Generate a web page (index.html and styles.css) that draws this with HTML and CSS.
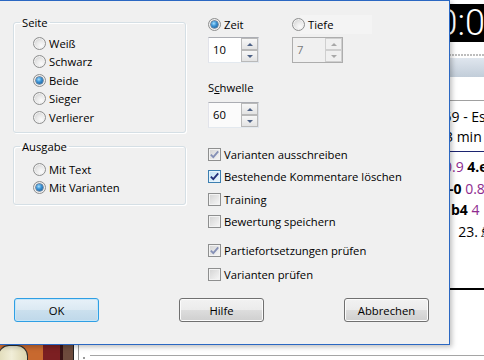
FILE: index.html
```html
<!DOCTYPE html>
<html lang="de">
  <head>
    <meta charset="utf-8" />
    <title>Analyse</title>
    <link rel="stylesheet" href="styles.css">
  </head>
  <body>
    <div class="app">
      <div class="board">
        <div class="piece"></div>
      </div>
      <div class="main">
        <div class="work">
          <div class="center"></div>
          <div class="notation">
            <div class="clock">00:00:00</div>
            <div class="dots"></div>
            <div class="tabbar"></div>
            <div class="game">
              <div class="line h1">2459 - Esbjerg</div>
              <div class="line h2">2+3 min</div>
            </div>
            <div class="moves">
              <div class="line m1"><span class="ev">+0.9</span> <b>4.e4</b></div>
              <div class="line m2"><b>0-0</b> <span class="ev">0.8</span></div>
              <div class="line m3"><b>b4</b> <span class="ev">4</span></div>
              <div class="line m4">23.&#9815;</div>
            </div>
          </div>
        </div>
        <div class="status"><span class="grip"></span><span class="rule"></span></div>
      </div>
    </div>

    <div class="dialog">
      <div class="dlg-body">
        <div class="col-left">
          <fieldset class="group">
            <legend>Seite</legend>
            <div class="opts">
              <label class="radio"><span class="rb"></span>Weiß</label>
              <label class="radio"><span class="rb"></span>Schwarz</label>
              <label class="radio"><span class="rb on"></span>Beide</label>
              <label class="radio"><span class="rb"></span>Sieger</label>
              <label class="radio"><span class="rb"></span>Verlierer</label>
            </div>
          </fieldset>
          <fieldset class="group group-out">
            <legend>Ausgabe</legend>
            <div class="opts">
              <label class="radio"><span class="rb"></span>Mit Text</label>
              <label class="radio"><span class="rb on"></span>Mit Varianten</label>
            </div>
          </fieldset>
        </div>

        <div class="col-right">
          <div class="modes">
            <div class="mode">
              <label class="radio"><span class="rb on"></span>Zeit</label>
              <div class="spin">
                <span class="val">10</span>
                <span class="arrows"><span class="up"></span><span class="down"></span></span>
              </div>
            </div>
            <div class="mode mode-off">
              <label class="radio"><span class="rb"></span><span class="lbl">Tiefe</span></label>
              <div class="spin spin-off">
                <span class="val">7</span>
                <span class="arrows"><span class="up"></span><span class="down"></span></span>
              </div>
            </div>
          </div>

          <div class="field-label">S<u>c</u>hwelle</div>
          <div class="spin spin-soft">
            <span class="val">60</span>
            <span class="arrows"><span class="up"></span><span class="down"></span></span>
          </div>

          <div class="checks">
            <label class="check c1"><span class="cb on soft"><svg viewBox="0 0 11 11"><path d="M1.8 5.6 4.3 8.2 9.2 2.4"/></svg></span>Varianten ausschreiben</label>
            <label class="check c2"><span class="cb on hot"><svg viewBox="0 0 11 11"><path d="M1.8 5.6 4.3 8.2 9.2 2.4"/></svg></span>Bestehende Kommentare löschen</label>
            <label class="check c3"><span class="cb"></span>Training</label>
            <label class="check c4"><span class="cb"></span>Bewertung speichern</label>
            <label class="check c5"><span class="cb on soft"><svg viewBox="0 0 11 11"><path d="M1.8 5.6 4.3 8.2 9.2 2.4"/></svg></span>Partiefortsetzungen prüfen</label>
            <label class="check c6"><span class="cb"></span>Varianten prüfen</label>
          </div>
        </div>
      </div>

      <div class="buttons">
        <button class="btn btn-default" type="button">OK</button>
        <button class="btn" type="button">Hilfe</button>
        <button class="btn" type="button">Abbrechen</button>
      </div>
    </div>
  </body>
</html>
```

FILE: styles.css
```css
* {
  box-sizing: border-box;
}
html,
body {
  margin: 0;
  padding: 0;
}
body {
  position: relative;
  width: 484px;
  height: 360px;
  overflow: hidden;
  background: #fff;
  color: #000;
  font-family: "Open Sans", "Noto Sans", sans-serif;
  font-size: 11.25px;
}

/* application behind the dialog */
.app {
  display: flex;
  height: 360px;
}
.board {
  width: 74px;
  flex-shrink: 0;
  display: flex;
  flex-direction: column;
  justify-content: flex-end;
  overflow: hidden;
  background: linear-gradient(90deg, #c8692f 0 43px, #7c1f22 43px 60px, #3a1416 60px 63px, #6d4b3d 63px 73px, #222 73px 74px);
}
.board .piece {
  width: 30px;
  height: 15px;
  margin-left: -2px;
  border: 1.5px solid #2e2e2e;
  border-bottom: none;
  border-radius: 11px 11px 0 0;
  background: linear-gradient(90deg, #e2ddbb, #f1eed8 45%, #dcd5ae);
}
.main {
  flex: 1;
  display: flex;
  flex-direction: column;
  margin-left: 4px;
  border-left: 1px solid #9a9a9a;
}
.work {
  flex: 1;
  display: flex;
}
.center {
  flex: 1;
}
.notation {
  width: 68px;
  flex-shrink: 0;
  overflow: hidden;
  white-space: nowrap;
  font-size: 14px;
}
.clock {
  margin-top: 4px;
  height: 38px;
  padding-left: 1.6px;
  background: #000;
  color: #fff;
  font-family: Roboto, "Open Sans", sans-serif;
  font-weight: 300;
  font-size: 36px;
  line-height: 38px;
}
.dots {
  margin-top: 12px;
  height: 2px;
  background: repeating-linear-gradient(90deg, #bdbdbd 0 2px, transparent 2px 3px);
}
.tabbar {
  margin-top: 2px;
  height: 19px;
  background: linear-gradient(#dfe6ee, #c2cdd9);
}
.game {
  margin-top: 23px;
  height: 52px;
  padding-top: 6px;
  border-top: 1px solid #a0a0a0;
  border-bottom: 1px solid #1c2470;
}
.game .line {
  line-height: 20px;
}
.moves {
  height: 138px;
  padding-top: 4px;
  border-bottom: 2px solid #000;
}
.moves .line {
  line-height: 21.5px;
}
.moves b {
  font-weight: 700;
}
.ev {
  color: #8e2a8e;
}
.h1 { padding-left: 11.5px; }
.h2 { padding-left: 13px; }
.m1 { padding-left: 20px; }
.m2 { padding-left: 25px; }
.m3 { padding-left: 35px; }
.m4 { padding-left: 42.3px; }

.status {
  display: flex;
  align-items: flex-start;
  height: 5px;
  padding-left: 4px;
}
.status .grip {
  width: 2px;
  height: 2px;
  margin-top: 2px;
  background: #9a9a9a;
}
.status .rule {
  flex: 1;
  margin-left: 5px;
  border-top: 1px solid #a5a5a5;
}

/* dialog */
.dialog {
  position: absolute;
  left: 0;
  top: 0;
  width: 450px;
  height: 345px;
  display: flex;
  flex-direction: column;
  background: #f0f0f0;
  border-top: 1px solid #2a67c2;
  border-right: 1px solid #2a67c2;
  border-bottom: 1px solid #2a67c2;
  box-shadow: 2px 2px 5px rgba(0, 0, 0, 0.25);
}
.dlg-body {
  display: flex;
  padding-top: 14px;
}
.col-left {
  width: 208px;
  padding-left: 13px;
}
.group {
  width: 173px;
  margin: 0;
  padding: 0;
  border: 1px solid #d5dfe5;
  border-radius: 3px;
  box-shadow: inset 1px 1px 0 #fff, 1px 1px 0 #fff;
}
.group legend {
  margin-left: 6px;
  padding: 0 2px;
  line-height: 15px;
}
.group .opts {
  padding: 4px 0 5.5px 19px;
}
.group-out {
  margin-top: 6px;
}
.group-out .opts {
  padding: 6px 0 7px 19px;
}

.radio {
  display: flex;
  align-items: center;
  height: 18.5px;
}
.rb {
  width: 13px;
  height: 13px;
  flex-shrink: 0;
  display: flex;
  align-items: center;
  justify-content: center;
  margin-right: 3px;
  border: 1px solid #8e8f8f;
  border-radius: 50%;
  background: radial-gradient(circle at 65% 70%, #fbfbfb 0, #e8e8e8 45%, #c4c4c4 100%);
  box-shadow: inset 0 0 0 1px #f2f2f2;
}
.rb.on::after {
  content: "";
  width: 7px;
  height: 7px;
  border-radius: 50%;
  background: radial-gradient(circle at 40% 35%, #a6e1ff 0, #3d94d6 40%, #0f4d85 100%);
  box-shadow: 0 0 0 0.5px #1d3f66;
}

.col-right {
  flex: 1;
}
.modes {
  display: flex;
}
.mode {
  width: 84px;
}
.mode-off .radio {
  width: 80px;
  background: linear-gradient(90deg, transparent 8px, #f4f4f4 8px);
}
.spin {
  display: flex;
  width: 51px;
  height: 26px;
  margin-top: 3.5px;
  background: #fff;
  border: 1px solid;
  border-color: #abadb3 #dbdfe6 #e3e9ef #e2e3ea;
}
.spin .val {
  flex: 1;
  padding-left: 4px;
  line-height: 23px;
}
.spin .arrows {
  width: 17px;
  display: flex;
  flex-direction: column;
}
.spin .arrows span {
  flex: 1;
  display: flex;
  align-items: center;
  justify-content: center;
  border: 1px solid #b9b9b9;
  background: linear-gradient(#f7f7f7, #e3e3e3);
}
.spin .arrows span::after {
  content: "";
  border-left: 3px solid transparent;
  border-right: 3px solid transparent;
}
.spin .up::after {
  border-bottom: 3px solid #4d6185;
}
.spin .down::after {
  border-top: 3px solid #4d6185;
}
.spin-off {
  background: #f0f0f0;
  border-color: #adadad;
  color: #7a7a7a;
}
.spin-off .arrows span {
  border-color: #cfcfcf;
  background: #f0f0f0;
}
.spin-off .up::after {
  border-bottom-color: #a8a8a8;
}
.spin-off .down::after {
  border-top-color: #a8a8a8;
}
.spin-soft {
  background: #fbfbfb;
}
.field-label {
  margin-top: 16.5px;
  line-height: 15px;
}
.field-label + .spin {
  margin-top: 7.5px;
}

.checks {
  padding-top: 16px;
}
.check {
  display: flex;
  align-items: center;
  height: 20px;
}
.c2 { margin-top: 2px; }
.c3 { margin-top: 3px; }
.c4 { margin-top: 2px; }
.c5 { margin-top: 9px; }
.c6 { margin-top: 4px; }
.cb {
  width: 13px;
  height: 13px;
  flex-shrink: 0;
  margin-right: 3px;
  border: 1px solid #8e8f8f;
  background: linear-gradient(135deg, #d2d2d2, #f8f8f8);
  box-shadow: inset 0 0 0 1px #f3f3f3;
}
.cb svg {
  display: block;
  width: 11px;
  height: 11px;
  fill: none;
  stroke: #22307a;
  stroke-width: 1.8;
}
.cb.soft svg {
  stroke: #8590b6;
}
.cb.hot {
  border-color: #3c7fb1;
  background: linear-gradient(135deg, #bfe1f6, #eef7fd);
  box-shadow: inset 0 0 0 1px #e6f3fc;
}

.buttons {
  display: flex;
  justify-content: space-between;
  margin-top: auto;
  padding: 0 20px 22px 14px;
}
.btn {
  width: 85px;
  height: 24px;
  padding: 0;
  font-family: inherit;
  font-size: 11.25px;
  color: #000;
  border: 1px solid #707070;
  border-radius: 3px;
  background: linear-gradient(#f2f2f2 0, #ebebeb 50%, #dddddd 50%, #cfcfcf 100%);
  box-shadow: inset 0 0 0 1px #fbfbfb;
}
.btn-default {
  border-color: #2f9fe4;
  background: linear-gradient(#e7f1f8 0, #dbe9f3 50%, #cbe0ee 50%, #bfd8ea 100%);
  box-shadow: inset 0 0 0 1px #c6e6f8;
}
```
